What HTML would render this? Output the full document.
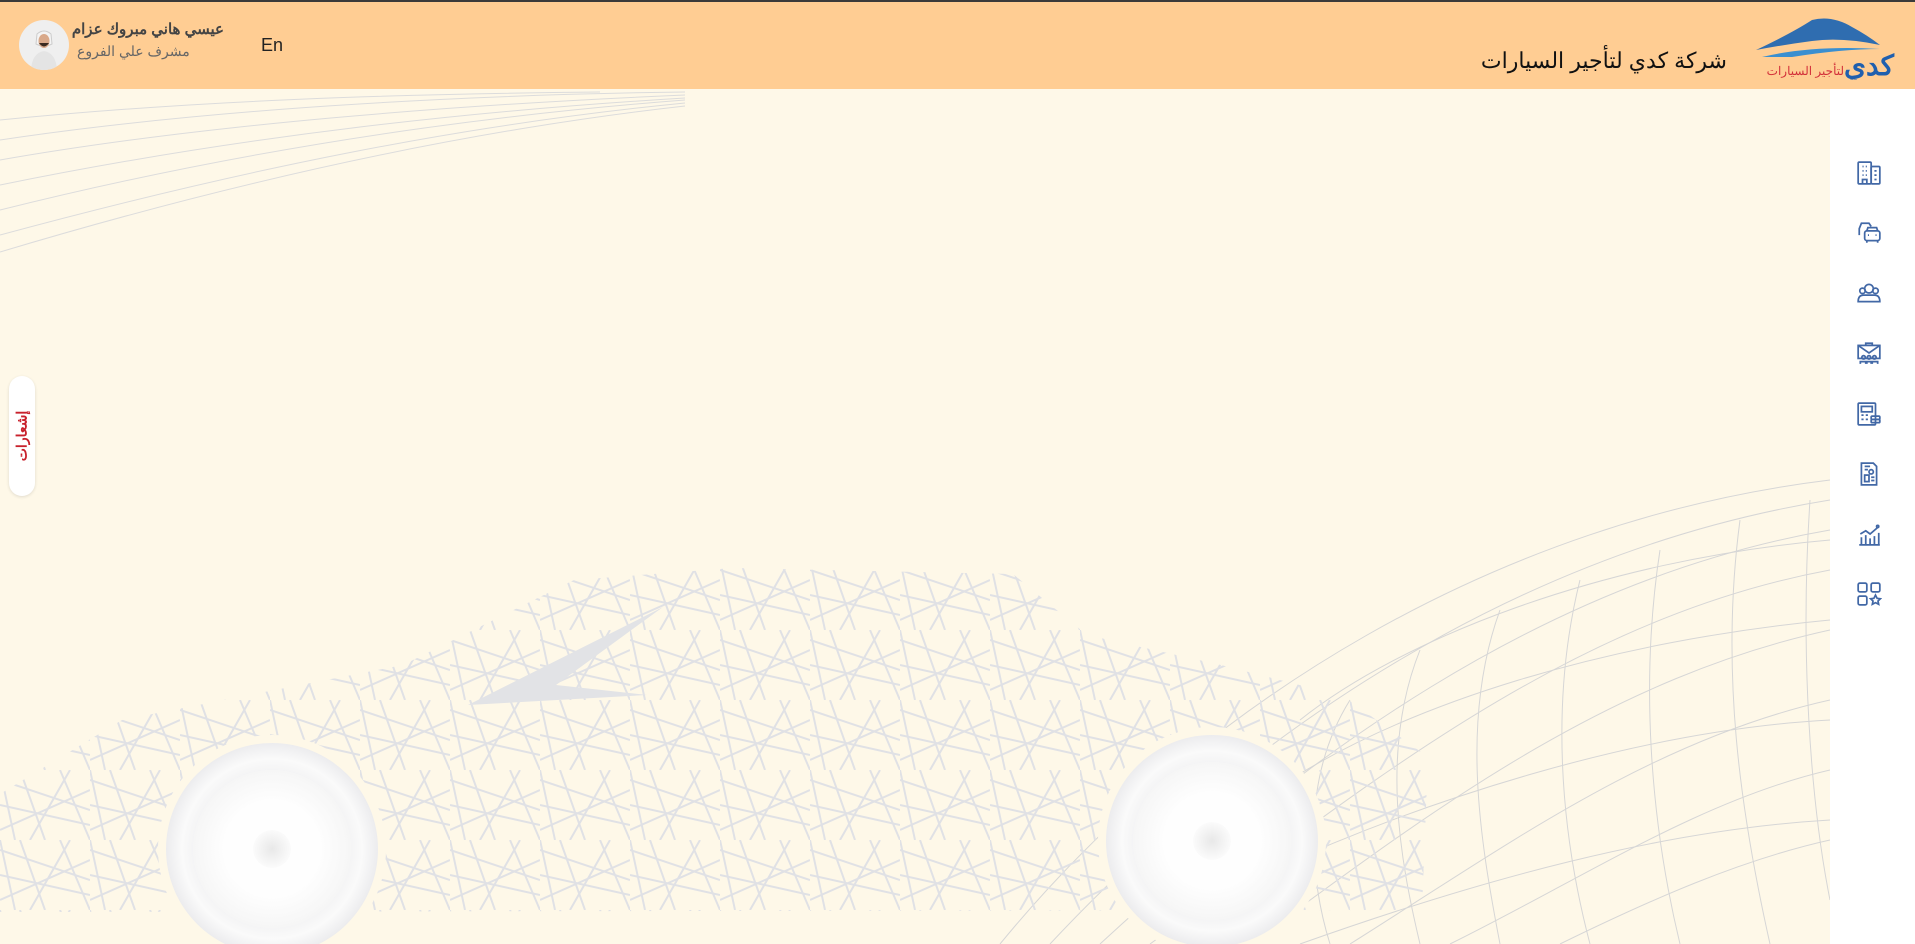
<!DOCTYPE html>
<html><head><meta charset="utf-8">
<style>
*{margin:0;padding:0;box-sizing:border-box}
html,body{width:1915px;height:944px;overflow:hidden;background:#fef8e8;font-family:"Liberation Sans","Noto Sans CJK SC",sans-serif}
.hdr{position:absolute;left:0;top:0;width:1915px;height:89px;background:#ffcd93;border-top:2px solid #3a3a3a}
.side{position:absolute;left:1830px;top:89px;width:85px;height:855px;background:#fff}
.ic{position:absolute;left:1856px;width:26px;height:26px}
.tab{position:absolute;left:9px;top:376px;width:26px;height:120px;background:#fff;border-radius:13px;box-shadow:0 1px 3px rgba(0,0,0,.12)}
.tab span{position:absolute;left:50%;top:50%;transform:translate(-50%,-50%) rotate(-90deg);color:#c8212c;font-size:14px;font-weight:bold;white-space:nowrap}
</style></head><body>
<svg style="position:absolute;left:0;top:89px" width="1830" height="855" viewBox="0 89 1830 855">
<defs>
<pattern id="mesh" width="90" height="70" patternUnits="userSpaceOnUse">
<g stroke="#e0e1e5" stroke-width="2" fill="none">
<path d="M0 10 L90 40 M0 60 L90 20 M20 0 L45 70 M70 0 L30 70 M0 35 L90 55 M60 0 L90 70 M0 0 L15 70"/>
</g></pattern>
<radialGradient id="wo"><stop offset="0.72" stop-color="#f3f3f4"/><stop offset="0.85" stop-color="#fafafa"/><stop offset="1" stop-color="#ececee"/></radialGradient>
<radialGradient id="wi"><stop offset="0.6" stop-color="#fefefe"/><stop offset="1" stop-color="#f6f6f6"/></radialGradient>
<radialGradient id="hub"><stop offset="0" stop-color="#e8e8e8"/><stop offset="1" stop-color="#fbfbfb"/></radialGradient>
</defs>
<g stroke="#dcdcdc" stroke-width="1" fill="none">
<path d="M0 140 C200 110 450 95 685 92"/><path d="M0 160 C200 125 450 105 685 95"/>
<path d="M0 185 C220 140 450 112 685 98"/><path d="M0 210 C220 155 450 118 685 100"/>
<path d="M0 235 C240 170 460 125 685 103"/><path d="M0 252 C240 180 470 130 685 106"/>
<path d="M0 120 C200 100 400 94 600 92"/>
</g>
<g stroke="#d6d6d6" stroke-width="1" fill="none">
<path d="M1000 944 C1200 700 1500 520 1830 480"/>
<path d="M1050 944 C1250 730 1520 550 1830 500"/>
<path d="M1100 944 C1300 760 1540 580 1830 530"/>
<path d="M1150 944 C1350 800 1560 620 1830 570"/>
<path d="M1250 944 C1420 820 1600 680 1830 630"/>
<path d="M1350 944 C1500 850 1650 740 1830 700"/>
<path d="M1450 944 C1580 880 1700 800 1830 770"/>
<path d="M1560 944 C1650 900 1740 860 1830 840"/>
<path d="M1300 720 C1400 640 1600 560 1830 540"/>
<path d="M1260 800 C1400 700 1620 640 1830 620"/>
<path d="M1250 880 C1420 800 1640 730 1830 720"/>
<path d="M1300 944 C1480 880 1660 830 1830 820"/>
<path d="M1350 700 C1300 780 1310 880 1330 944"/>
<path d="M1420 650 C1380 750 1400 860 1420 944"/>
<path d="M1500 610 C1460 720 1480 840 1500 944"/>
<path d="M1580 580 C1550 700 1560 830 1590 944"/>
<path d="M1660 550 C1640 680 1650 820 1680 944"/>
<path d="M1740 520 C1720 670 1740 810 1770 944"/>
<path d="M1810 500 C1800 650 1810 800 1830 900"/>
</g>
<polygon points="0,794 122,720 244,696 403,665 574,580 733,568 1013,574 1087,635 1221,665 1343,696 1428,757 1422,910 0,912" fill="url(#mesh)"/>
<polygon points="468,705 663,607 556,685 647,695" fill="#e2e3e6"/>
<circle cx="272" cy="849" r="114" fill="#fef8e8"/>
<circle cx="272" cy="849" r="106" fill="url(#wo)"/>
<circle cx="272" cy="849" r="79" fill="url(#wi)"/>
<circle cx="272" cy="849" r="19" fill="url(#hub)"/>
<circle cx="1212" cy="841" r="114" fill="#fef8e8"/>
<circle cx="1212" cy="841" r="106" fill="url(#wo)"/>
<circle cx="1212" cy="841" r="79" fill="url(#wi)"/>
<circle cx="1212" cy="841" r="19" fill="url(#hub)"/>
</svg>

<div class="hdr">
<div style="position:absolute;left:19px;top:18px;width:50px;height:50px;border-radius:50%;background:#efefef;overflow:hidden">
<svg width="50" height="50" viewBox="0 0 50 50"><path d="M18 14 Q25 8 32 14 L33 24 Q25 28 17 24Z" fill="#f4f4f4" stroke="#ccc"/><ellipse cx="25" cy="21" rx="5.5" ry="7" fill="#d9a98a"/><path d="M20 23 Q25 30 30 23" fill="#3a2a20"/><path d="M12 50 Q13 33 25 31 Q37 33 38 50Z" fill="#e4e4e4"/></svg>
</div>
<div style="position:absolute;right:1691px;top:18px;text-align:right;direction:rtl;font-size:15px;font-weight:bold;color:#444">عيسي هاني مبروك عزام</div>
<div style="position:absolute;left:77px;top:41px;direction:rtl;font-size:14px;color:#666">مشرف علي الفروع</div>
<div style="position:absolute;left:261px;top:33px;font-size:18px;color:#222">En</div>
<div style="position:absolute;right:188px;top:46px;direction:rtl;font-size:22px;color:#111">شركة كدي لتأجير السيارات</div>
<svg style="position:absolute;left:1752px;top:13px" width="145" height="65" viewBox="0 0 145 65">
<path d="M4 35 Q40 18 60 5 Q80 0 100 12 Q115 20 128 30 Q90 22 60 26 Q30 30 4 35Z" fill="#2f6db0"/>
<path d="M10 42 Q60 30 128 34 Q90 34 40 42Z" fill="#3a8fd0"/>
<text x="142" y="60" text-anchor="end" font-size="28" font-weight="bold" fill="#1f5fae" font-family="Noto Sans CJK SC,sans-serif">كدي</text>
<text x="92" y="60" text-anchor="end" font-size="12" fill="#d2303a" font-family="Liberation Sans,sans-serif">لتأجير السيارات</text>
</svg>
</div>

<div class="side"></div>
<svg class="ic" style="top:160px" viewBox="0 0 24 24" fill="none" stroke="#4268a6" stroke-width="1.6"><rect x="2" y="2" width="12" height="20" rx="1"/><rect x="14" y="6" width="8" height="16" rx="1"/><path d="M6 6h1M9 6h1M6 10h1M9 10h1M6 14h1M9 14h1M6 22v-4h4v4M17 10h2M17 14h2M17 18h2"/></svg>
<svg class="ic" style="top:220px" viewBox="0 0 24 24" fill="none" stroke="#4268a6" stroke-width="1.6"><path d="M3 14V8l2-5h7l2 3"/><rect x="8" y="10" width="14" height="9" rx="2"/><path d="M10 10l1-3h8l1 3M10 19v2M20 19v2M11 14h1M18 14h1"/></svg>
<svg class="ic" style="top:280px" viewBox="0 0 24 24" fill="none" stroke="#4268a6" stroke-width="1.6"><circle cx="12" cy="8" r="4"/><circle cx="6" cy="10" r="2.5"/><circle cx="18" cy="10" r="2.5"/><path d="M2 20q0-6 5-6h10q5 0 5 6zM2 20h20"/></svg>
<svg class="ic" style="top:340px" viewBox="0 0 24 24" fill="none" stroke="#4268a6" stroke-width="1.6"><rect x="2" y="5" width="20" height="12"/><path d="M9 5V3h6v2M2 5l10 7 10-7"/><circle cx="7" cy="16" r="1.6"/><circle cx="12" cy="16" r="1.6"/><circle cx="17" cy="16" r="1.6"/><path d="M4 22v-2h6v2M9 22v-2h6v2M14 22v-2h6v2"/></svg>
<svg class="ic" style="top:401px" viewBox="0 0 24 24" fill="none" stroke="#4268a6" stroke-width="1.6"><rect x="2" y="2" width="16" height="20" rx="1"/><rect x="5" y="5" width="10" height="5"/><path d="M5 13h2M9 13h2M5 17h2M9 17h2"/><rect x="14" y="14" width="8" height="3" rx="1"/><rect x="14" y="17" width="8" height="3" rx="1"/></svg>
<svg class="ic" style="top:461px" viewBox="0 0 24 24" fill="none" stroke="#4268a6" stroke-width="1.6"><path d="M5 2h11l3 3v17H5z"/><path d="M8 5h5M8 8h3"/><circle cx="14" cy="10" r="2"/><rect x="8" y="13" width="4" height="6"/><path d="M14 15h3M14 18h3"/></svg>
<svg class="ic" style="top:521px" viewBox="0 0 24 24" fill="none" stroke="#4268a6" stroke-width="1.6"><path d="M3 22h19M5 22v-7M9 22v-9M13 22v-6M17 22v-8M21 22v-11M4 12l5-3 4 3 7-6"/><circle cx="20" cy="5" r="1"/></svg>
<svg class="ic" style="top:581px" viewBox="0 0 24 24" fill="none" stroke="#4268a6" stroke-width="1.6"><rect x="2" y="2" width="8" height="8" rx="1.5"/><rect x="14" y="2" width="8" height="8" rx="1.5"/><rect x="2" y="14" width="8" height="8" rx="1.5"/><path d="M18 13l1.5 3 3 .4-2.2 2.1.6 3-2.9-1.5-2.9 1.5.6-3-2.2-2.1 3-.4z"/></svg>

<div class="tab"><span>إشعارات</span></div>
</body></html>
